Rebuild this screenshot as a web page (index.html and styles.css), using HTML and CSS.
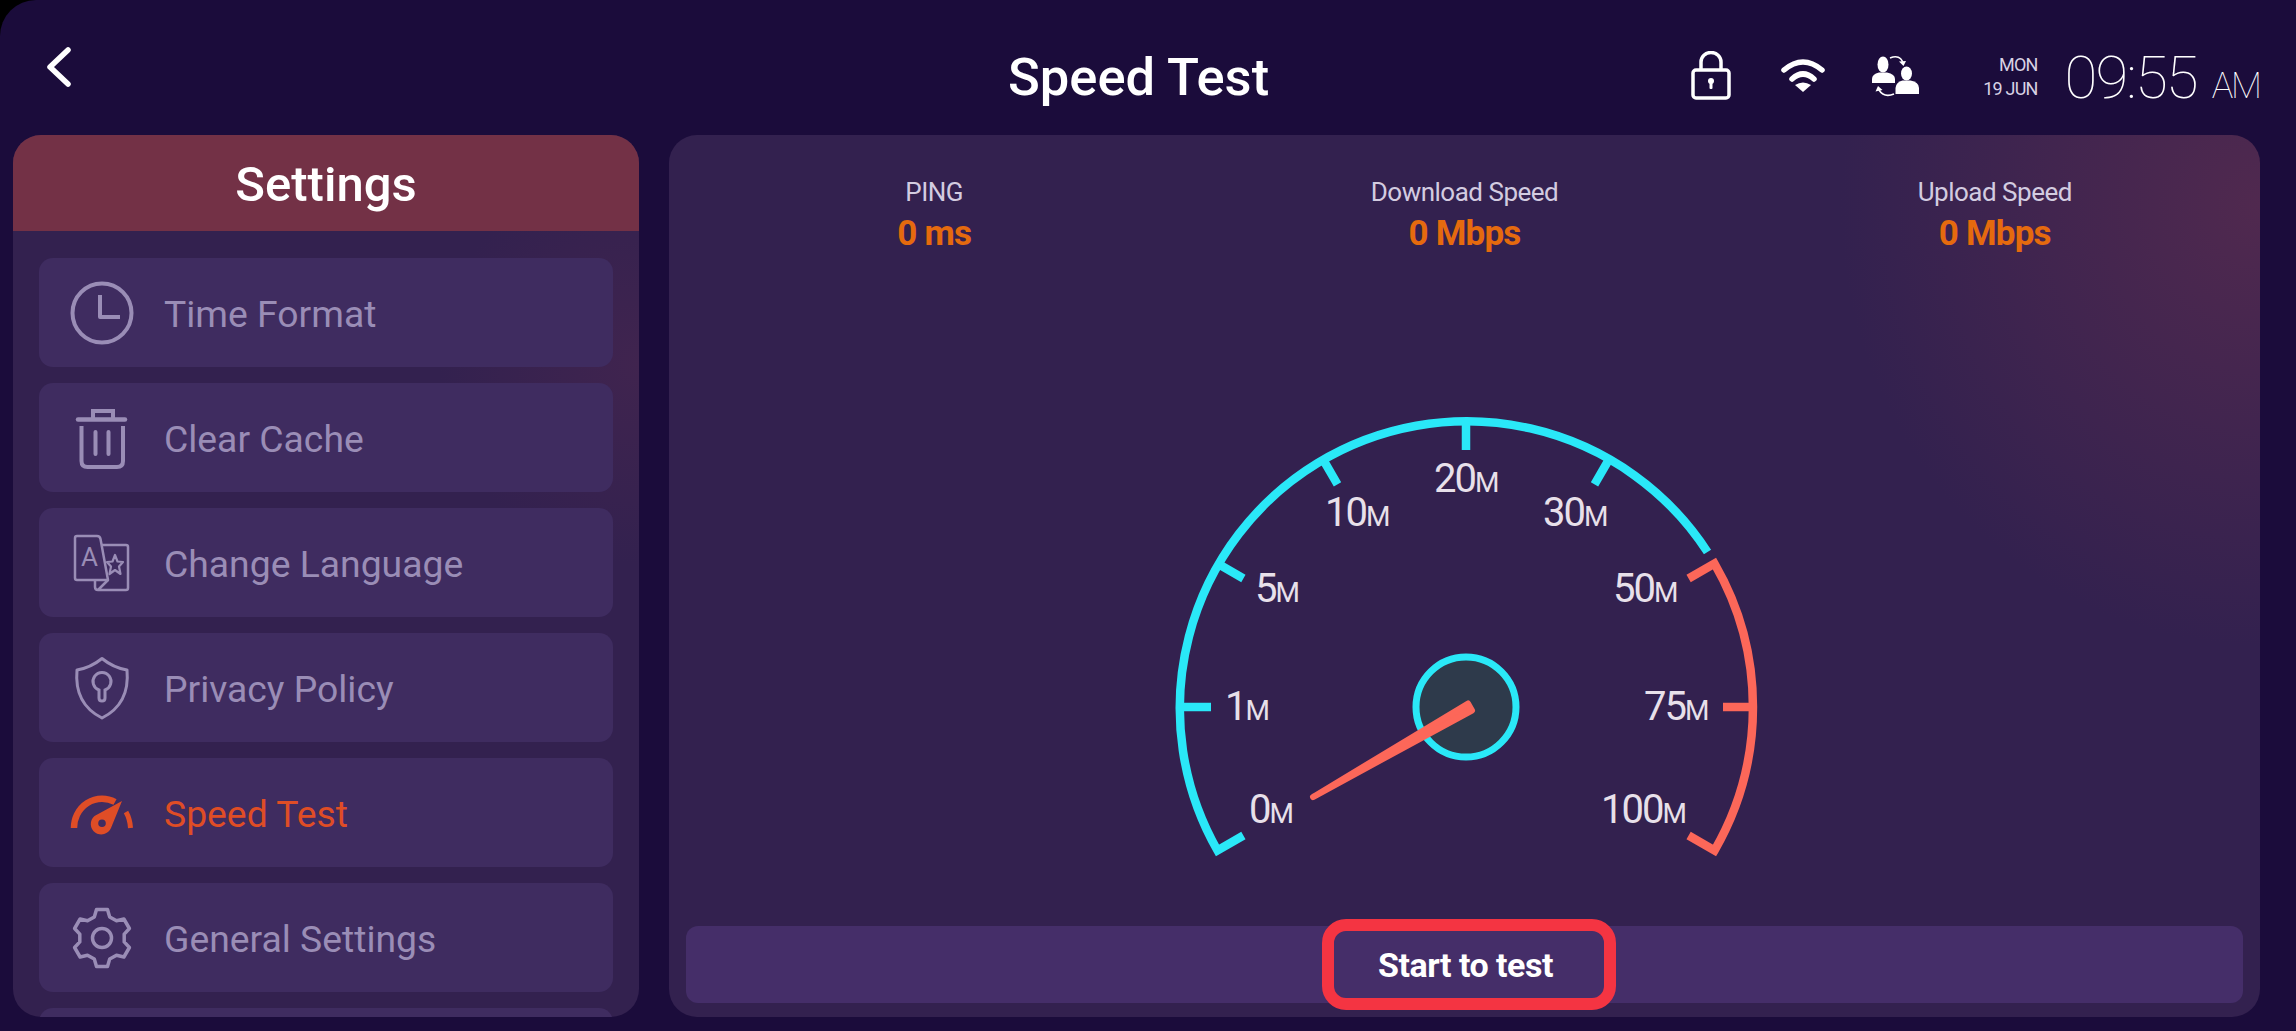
FILE: index.html
```html
<!DOCTYPE html>
<html lang="en">
<head>
    <meta charset="UTF-8">
    <meta name="viewport" content="width=device-width, initial-scale=1.0">
    <title>Speed Test</title>
    <link rel="stylesheet" href="styles.css">
</head>
<body>
<div class="app">
    <header class="topbar">
        <button class="back" aria-label="Back">
            <svg width="24" height="40" viewBox="0 0 24 40"><path d="M21 3 L3 20 L21 37" fill="none" stroke="currentColor" stroke-width="5.5" stroke-linecap="round" stroke-linejoin="round"/></svg>
        </button>
        <h1 class="page_title">Speed Test</h1>
        <div class="status">
            <svg class="lock" width="40" height="49" viewBox="0 0 40 49">
                <rect x="2" y="19" width="36" height="28" rx="3" fill="none" stroke="currentColor" stroke-width="3.5"/>
                <path d="M10 19 V11 a10 9.5 0 0 1 20 0 V19" fill="none" stroke="currentColor" stroke-width="3.5"/>
                <circle cx="20" cy="30" r="3" fill="currentColor"/>
                <rect x="18.5" y="30" width="3" height="8" rx="1" fill="currentColor"/>
            </svg>
            <svg class="wifi" width="44" height="35" viewBox="0 0 44 35">
                <path d="M3 13 Q22 -3 41 13" fill="none" stroke="currentColor" stroke-width="5.5" stroke-linecap="round"/>
                <path d="M11 22 Q22 12 33 22" fill="none" stroke="currentColor" stroke-width="5.5" stroke-linecap="round"/>
                <path d="M22 35 L14 28 Q22 23 30 28 Z" fill="currentColor"/>
            </svg>
            <svg class="users" width="47" height="42" viewBox="0 0 47 42">
                <ellipse cx="11" cy="9.5" rx="5.5" ry="8" fill="currentColor"/>
                <path d="M0 28 V24 Q0 19 7 17.5 L15 17.5 Q23 19 23 24 V28 Z" fill="currentColor"/>
                <ellipse cx="34.5" cy="18.5" rx="5.5" ry="7" fill="currentColor"/>
                <path d="M23.5 39 V33 Q24 27 30.5 25.5 L38.5 25.5 Q47 27 47 33 V39 Z" fill="currentColor"/>
                <path d="M18 3 Q28 -1 31 8" fill="none" stroke="currentColor" stroke-width="1.6"/>
                <path d="M27 6.5 L31.5 11 L34 6 Z" fill="currentColor"/>
                <path d="M22 39 Q12 43 7 35" fill="none" stroke="currentColor" stroke-width="1.6"/>
                <path d="M3.5 36.5 L6 31 L10.5 35 Z" fill="currentColor"/>
            </svg>
            <div class="date">
                <span>MON</span>
                <span>19 JUN</span>
            </div>
            <div class="clock">09:55<span class="ampm">AM</span></div>
        </div>
    </header>

    <main class="content">
        <aside class="sidebar">
            <div class="sidebar_title">Settings</div>
            <ul class="menu">
                <li class="menu_item">
                    <svg class="menu_icon" viewBox="0 0 64 64">
                        <circle cx="32" cy="32" r="29.5" fill="none" stroke="currentColor" stroke-width="4"/>
                        <path d="M30 14 V36 H50" fill="none" stroke="currentColor" stroke-width="4" stroke-linejoin="round"/>
                    </svg>
                    Time Format
                </li>
                <li class="menu_item">
                    <svg class="menu_icon" viewBox="0 0 64 64">
                        <path d="M8 13.5 H55" stroke="currentColor" stroke-width="4.5" stroke-linecap="round" fill="none"/>
                        <path d="M23 12 V5 H43 V12" stroke="currentColor" stroke-width="4" fill="none"/>
                        <path d="M11.5 20 V55 Q11.5 61 17.5 61 H47 Q53 61 53 55 V20" stroke="currentColor" stroke-width="4" fill="none"/>
                        <path d="M25.5 26 V48 M38.5 26 V48" stroke="currentColor" stroke-width="4" stroke-linecap="round" fill="none"/>
                    </svg>
                    Clear Cache
                </li>
                <li class="menu_item">
                    <svg class="menu_icon" viewBox="0 0 64 64">
                        <path d="M7 5 H27 Q30 5 30.5 8 L38 49 H7 Q5 49 5 47 V7 Q5 5 7 5 Z" fill="none" stroke="currentColor" stroke-width="2.5" stroke-linejoin="round"/>
                        <path d="M31 14 H56 Q58 14 58 16 V57 Q58 59 56 59 H28 Q25 59 25 56 V49 M38 49 L28 59" fill="none" stroke="currentColor" stroke-width="2.5" stroke-linejoin="round"/>
                        <text class="lang_letter" x="11" y="35">A</text>
                        <path d="M45 24 L47.5 30.5 L53 31 L49 35.5 L50.5 43 L45 39 L39.5 43 L41 35.5 L37 31 L42.5 30.5 Z" fill="none" stroke="currentColor" stroke-width="2.2" stroke-linejoin="round"/>
                    </svg>
                    Change Language
                </li>
                <li class="menu_item">
                    <svg class="menu_icon" viewBox="0 0 64 64">
                        <path d="M32 2.5 C40 9 48 12.5 57 14 C59 36 52 52 32 62 C12 52 5 36 7 14 C16 12.5 24 9 32 2.5 Z" fill="none" stroke="currentColor" stroke-width="3" stroke-linejoin="round"/>
                        <path d="M29 34 A9 9 0 1 1 35 34 V42 Q35 45 32 45 Q29 45 29 42 Z" fill="none" stroke="currentColor" stroke-width="3"/>
                    </svg>
                    Privacy Policy
                </li>
                <li class="menu_item active">
                    <svg class="menu_icon" viewBox="0 0 64 64">
                        <path d="M4 47 A28 29 0 0 1 45 21" fill="none" stroke="currentColor" stroke-width="6.5"/>
                        <path d="M56 31 Q60 38 60.5 47" fill="none" stroke="currentColor" stroke-width="5"/>
                        <path fill-rule="evenodd" fill="currentColor" d="M52 20 L41 47 A10.5 10.5 0 1 1 24.5 35 Z M32 38.5 A3.8 3.8 0 1 0 32.01 46.1 A3.8 3.8 0 1 0 32 38.5 Z"/>
                    </svg>
                    Speed Test
                </li>
                <li class="menu_item">
                    <svg class="menu_icon" viewBox="0 0 64 64">
                        <path d="M24.3 10.9 L26.5 3.5 H37.5 L39.7 10.9 L46.5 14.8 L53.9 13 L59.4 22.5 L54.2 28.1 V35.9 L59.4 41.5 L53.9 51 L46.5 49.2 L39.7 53.1 L37.5 60.5 H26.5 L24.3 53.1 L17.5 49.2 L10.1 51 L4.6 41.5 L9.8 35.9 V28.1 L4.6 22.5 L10.1 13 L17.5 14.8 Z" fill="none" stroke="currentColor" stroke-width="3.5" stroke-linejoin="round"/>
                        <circle cx="32" cy="32" r="9.5" fill="none" stroke="currentColor" stroke-width="3.5"/>
                    </svg>
                    General Settings
                </li>
                <li class="menu_item"></li>
            </ul>
        </aside>

        <section class="panel">
            <div class="stats">
                <div class="stat">
                    <div class="stat_label">PING</div>
                    <div class="stat_value">0 ms</div>
                </div>
                <div class="stat">
                    <div class="stat_label">Download Speed</div>
                    <div class="stat_value">0 Mbps</div>
                </div>
                <div class="stat">
                    <div class="stat_label">Upload Speed</div>
                    <div class="stat_value">0 Mbps</div>
                </div>
            </div>

            <svg class="gauge" width="600" height="460" viewBox="-300 -300 600 460">
                <g fill="none" stroke-width="8.5" stroke-linejoin="miter">
                    <g stroke="#2ae8f8">
                        <path d="M-222.6 128.5 L-248.5 143.5 A287 287 0 0 1 241.5 -155"/>
                        <path d="M-287 0 H-255 M-248.5 -143.5 L-222.6 -128.5 M-143.5 -248.5 L-128.5 -222.6 M0 -287 V-257 M143.5 -248.5 L128.5 -222.6"/>
                    </g>
                    <g stroke="#fc6759">
                        <path d="M222.6 -128.5 L248.5 -143.5 A287 287 0 0 1 248.5 143.5 L222.6 128.5"/>
                        <path d="M287 0 H257"/>
                    </g>
                </g>
                <g class="gauge_labels">
                    <text x="-241" y="13">1<tspan>M</tspan></text>
                    <text x="-217" y="116">0<tspan>M</tspan></text>
                    <text x="-211" y="-105">5<tspan>M</tspan></text>
                    <text x="-141" y="-181">10<tspan>M</tspan></text>
                    <text x="-32" y="-215">20<tspan>M</tspan></text>
                    <text x="77" y="-181">30<tspan>M</tspan></text>
                    <text x="147" y="-105">50<tspan>M</tspan></text>
                    <text x="178" y="13">75<tspan>M</tspan></text>
                    <text x="135" y="116">100<tspan>M</tspan></text>
                </g>
                <circle r="50" fill="#2e3a4b" stroke="#2ae8f8" stroke-width="7"/>
                <path d="M6 3.5 L2 -3.5 L-153 90 Z" fill="#fc6759" stroke="#fc6759" stroke-width="6" stroke-linejoin="round"/>
            </svg>

            <div class="actions">
                <button class="start_button">Start to test</button>
            </div>
        </section>
    </main>
</div>
</body>
</html>
```

FILE: styles.css
```css
* {
    box-sizing: border-box;
}

html, body {
    margin: 0;
    height: 100%;
    background: #000;
    overflow: hidden;
}

body {
    font-family: Roboto, "Liberation Sans", sans-serif;
}

.app {
    height: 1031px;
    display: flex;
    flex-direction: column;
    background: #1b0c3b;
    color: #fff;
    border-top-left-radius: 36px;
}

/* top bar */
.topbar {
    height: 135px;
    flex: none;
    display: flex;
    align-items: flex-start;
    position: relative;
}

.back {
    width: 24px;
    height: 40px;
    margin: 47px 0 0 47px;
    padding: 0;
    border: 0;
    background: none;
    color: #fff;
}

.page_title {
    margin: 44px 0 0 937px;
    font-size: 52.5px;
    line-height: 66px;
    font-weight: 500;
    white-space: nowrap;
}

.status {
    margin: 51px 0 0 auto;
    padding-right: 36px;
    display: flex;
    align-items: flex-start;
}

.wifi {
    margin: 6px 0 0 50px;
}

.users {
    margin: 4px 0 0 47px;
}

.date {
    margin: 3px 0 0 64px;
    display: flex;
    flex-direction: column;
    gap: 3px;
    align-items: flex-end;
    font-size: 18px;
    line-height: 21px;
    letter-spacing: -0.8px;
    color: #d8d2e4;
}

.clock {
    margin: -6px 0 0 27px;
    font-size: 60px;
    line-height: 66px;
    font-weight: 100;
    letter-spacing: -2px;
    white-space: nowrap;
}

.ampm {
    margin-left: 15px;
    font-size: 36px;
    letter-spacing: -2px;
}

/* two columns */
.content {
    flex: 1;
    min-height: 0;
    display: flex;
    gap: 30px;
    padding: 0 36px 14px 13px;
}

.sidebar {
    width: 626px;
    flex: none;
    border-radius: 28px;
    overflow: hidden;
    background:
        radial-gradient(ellipse 200px 200px at 100% 26%, #40244f 0, rgba(64, 36, 79, 0) 100%),
        #33214f;
}

.sidebar_title {
    height: 96px;
    padding-top: 3px;
    display: flex;
    align-items: center;
    justify-content: center;
    background: #733146;
    font-size: 49px;
    font-weight: 500;
}

.menu {
    list-style: none;
    margin: 0;
    padding: 27px 26px 0;
    display: flex;
    flex-direction: column;
    gap: 16px;
}

.menu_item {
    height: 109px;
    flex: none;
    display: flex;
    align-items: center;
    gap: 30px;
    padding: 3px 0 0 31px;
    border-radius: 14px;
    background: #3f2c60;
    color: #9a8db6;
    font-size: 37.3px;
}

.menu_item.active {
    color: #df4d26;
}

.menu_icon {
    width: 64px;
    height: 64px;
    flex: none;
    margin-top: -3px;
}

.lang_letter {
    font-size: 26px;
    fill: currentColor;
}

/* speed panel */
.panel {
    flex: 1;
    min-width: 0;
    display: flex;
    flex-direction: column;
    border-radius: 28px;
    background:
        radial-gradient(ellipse 420px 440px at 100% 8%, #50294f 0, rgba(80, 41, 79, 0) 100%),
        #33214f;
}

.stats {
    display: grid;
    grid-template-columns: repeat(3, 1fr);
    padding-top: 42px;
    text-align: center;
}

.stat_label {
    font-size: 26px;
    line-height: 30px;
    letter-spacing: -0.5px;
    color: #d3cce0;
}

.stat_value {
    margin-top: 8px;
    font-size: 35px;
    line-height: 38px;
    font-weight: 700;
    letter-spacing: -0.8px;
    color: #e56a0e;
}

.gauge {
    display: block;
    margin: 154px auto 0;
    position: relative;
    left: 1px;
}

.gauge_labels {
    font-size: 40px;
    fill: #e8e0ea;
    letter-spacing: -2px;
}

.gauge_labels tspan {
    font-size: 28px;
    letter-spacing: 0;
}

.actions {
    margin: auto 17px 14px;
    height: 77px;
    display: flex;
    justify-content: center;
    align-items: center;
    border-radius: 12px;
    background: #452e69;
}

.start_button {
    width: 294px;
    height: 91px;
    margin-left: 8px;
    padding: 0 6px 0 0;
    border: 12px solid #f43442;
    border-radius: 24px;
    background: #452e69;
    color: #fff;
    font-family: inherit;
    font-size: 34px;
    font-weight: 700;
    letter-spacing: -0.5px;
}
```
